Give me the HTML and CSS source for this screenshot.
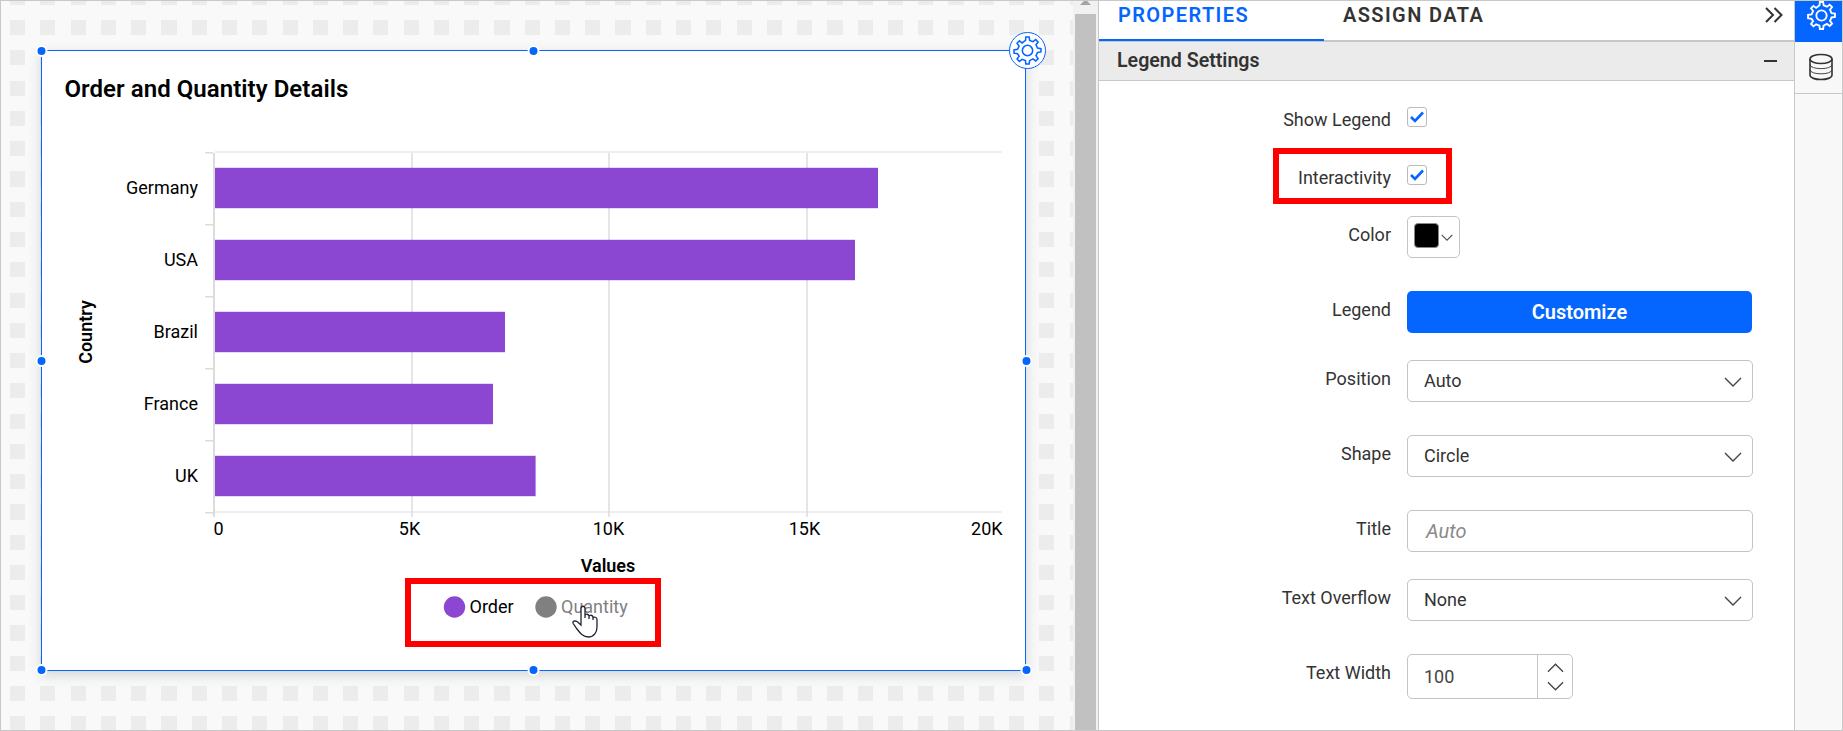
FILE: index.html
```html
<!DOCTYPE html>
<html lang="en">
<head>
<meta charset="utf-8">
<title>Legend Settings</title>
<link rel="stylesheet" href="styles.css">
</head>
<body>
<svg class="defs" width="0" height="0">
  <symbol id="gear" viewBox="-14 -14 28 28">
    <path d="M-1.900-9.800-1.600-13h3.200l.5 3.200 3.200 1.300 2.600-2 2.300 2.300-2 2.700 1.500 3.200 3.300.5v3.200l-3.300.5-1.500 3.200 2 2.700-2.300 2.300-2.600-2L2 9.800 1.600 13h-3.200L-2 9.800l-3.200-1.300-2.600 2-2.300-2.300 2-2.700-1.500-2.300-3.400-.6v-3.200l3.400-.5 1.500-3.200-2-2.700 2.300-2.300 2.600 2z"/>
    <circle r="5"/>
  </symbol>
  <symbol id="chev" viewBox="0 0 18 10"><path d="M1 1l8 8 8-8"/></symbol>
  <symbol id="check" viewBox="0 0 14 12"><path d="M1 6l4 4 8-8.500"/></symbol>
</svg>
<div class="app">
  <main class="canvas">
    <section class="widget">
      <h1 class="widget-title">Order and Quantity Details</h1>
      <svg class="chart" viewBox="42 51 983 619" width="983" height="619">
        <g class="grid">
          <path d="M215 152H1002M215 512H1002"/>
        </g>
        <g class="gridv">
          <path d="M412 153V517M609 153V517M807 153V517"/>
        </g>
        <path class="tick" d="M205 152.700h8M205 224.700h8M205 296.700h8M205 368.700h8M205 440.700h8M205 512.700h8"/>
        <g class="bars">
          <rect x="213.700" y="167.800" width="664.300" height="40.400"/>
          <rect x="213.700" y="239.800" width="641.300" height="40.400"/>
          <rect x="213.700" y="311.800" width="291.300" height="40.400"/>
          <rect x="213.700" y="383.800" width="279.300" height="40.400"/>
          <rect x="213.700" y="455.800" width="321.900" height="40.400"/>
        </g>
        <path class="axis" d="M214 153V517"/>
        <g class="cat">
          <text x="198" y="194">Germany</text>
          <text x="198" y="266">USA</text>
          <text x="198" y="338">Brazil</text>
          <text x="198" y="410">France</text>
          <text x="198" y="482">UK</text>
        </g>
        <g class="val">
          <text x="218.500" y="535">0</text>
          <text x="409.500" y="535">5K</text>
          <text x="608.500" y="535">10K</text>
          <text x="804.500" y="535">15K</text>
          <text x="986.800" y="535">20K</text>
        </g>
        <text class="name" x="608" y="572">Values</text>
        <text class="name" transform="translate(91.500 332) rotate(-90)">Country</text>
        <circle class="key-dot" cx="454.500" cy="607" r="10.700"/>
        <text class="key" x="469.500" y="613">Order</text>
        <circle class="key-dot key-off" cx="546" cy="607" r="10.700"/>
        <text class="key key-off" x="561" y="613">Quantity</text>
      </svg>
      <i class="dot n w"></i><i class="dot n c"></i>
      <i class="dot m w"></i><i class="dot m e"></i>
      <i class="dot s w"></i><i class="dot s c"></i><i class="dot s e"></i>
      <span class="badge"><svg width="29" height="29"><use href="#gear"/></svg></span>
      <span class="mark mark-legend"></span>
      <svg class="hand" viewBox="0 0 26 33" width="26" height="33">
        <path d="M9 20V3.500C9 .5 13 .5 13 3.500V13V10.500C14 8.500 16.500 9 17 11V14V11.500C18 9.500 20.500 10 21 12V15V13C22 11.500 25 12 25 14.500V22C25 27 22 32 16.500 32C11 32 8 28 5 24L1.200 18.500C0 16 3 15.500 5 16.500z"/>
      </svg>
    </section>
  </main>
  <div class="scroll"><i class="arrow"></i><i class="thumb"></i></div>
  <aside class="panel">
    <nav class="tabs">
      <span class="tab on">PROPERTIES</span>
      <span class="tab">ASSIGN DATA</span>
      <svg class="collapse" width="18" height="16" viewBox="0 0 18 16"><path d="M1 1l7 7-7 7M9.500 1l7 7-7 7"/></svg>
    </nav>
    <header class="section"><span>Legend Settings</span><i class="minus"></i></header>
    <div class="form">
      <div class="row tight r58"><label>Show Legend</label><span class="box"><svg width="14" height="12"><use href="#check"/></svg></span></div>
      <div class="row tight r51"><label>Interactivity</label><span class="box"><svg width="14" height="12"><use href="#check"/></svg></span><span class="mark mark-row"></span></div>
      <div class="row r75"><label>Color</label><span class="color"><i class="swatch"></i><svg width="12" height="7"><use href="#chev"/></svg></span></div>
      <div class="row r69"><label>Legend</label><button class="btn">Customize</button></div>
      <div class="row r75"><label>Position</label><span class="field">Auto<svg width="18" height="10"><use href="#chev"/></svg></span></div>
      <div class="row r75"><label>Shape</label><span class="field">Circle<svg width="18" height="10"><use href="#chev"/></svg></span></div>
      <div class="row r69"><label>Title</label><span class="field hint">Auto</span></div>
      <div class="row r75"><label>Text Overflow</label><span class="field">None<svg width="18" height="10"><use href="#chev"/></svg></span></div>
      <div class="row"><label>Text Width</label><span class="spin"><span class="num">100</span><span class="steps"><svg class="up" width="17" height="10"><use href="#chev"/></svg><svg width="17" height="10"><use href="#chev"/></svg></span></span></div>
    </div>
  </aside>
  <div class="rail">
    <span class="rail-on"><svg width="29" height="29"><use href="#gear"/></svg></span>
    <span class="rail-db"><svg width="24" height="28" viewBox="0 0 24 28"><ellipse cx="12" cy="6" rx="11" ry="4.500"/><path d="M1 6v16c0 6 22 6 22 0V6"/><path class="thin" d="M1 11.500c0 5.500 22 5.500 22 0M1 16.700c0 5.500 22 5.500 22 0"/></svg></span>
  </div>
</div>
</body>
</html>
```
FILE: styles.css
```css
* { box-sizing: border-box; }
body { margin: 0; font-family: Roboto, "Liberation Sans", sans-serif; font-size: 18px; color: #333; background: #fff; }
.defs { position: absolute; }
svg { display: block; fill: none; stroke: currentColor; }
.app { display: flex; width: 1843px; height: 731px; border: 1px solid #c8c8c8; overflow: hidden; }
.app > * { flex: none; }

.canvas {
  width: 1072px; padding: 49px 0 0 40px; overflow: hidden;
  background-color: #ececec;
  background-image:
    repeating-linear-gradient(90deg, transparent 0 15.130px, #f9f9f9 15.130px 30.270px),
    repeating-linear-gradient(180deg, transparent 0 15.130px, #f9f9f9 15.130px 30.270px);
  background-position: -21.200px 0, 0 -11.200px;
  background-size: 1200px 100%, 100% 800px;
}
.widget { position: relative; width: 985px; height: 621px; border: 1px solid #0565ff; background: #fff; box-shadow: 0 4px 12px rgba(60, 70, 80, .2); }
.widget-title { position: absolute; left: 22.500px; top: 23px; margin: 0; font-size: 24px; line-height: 30px; font-weight: 600; letter-spacing: .050px; color: #000; white-space: nowrap; }
.chart text { fill: #000; stroke: none; font-size: 18px; }
.grid path { stroke: #eee; stroke-width: 2; }
.gridv path { stroke: #ddd; stroke-width: 1.500; }
.tick { stroke: #dcdcdc; stroke-width: 1.500; }
.axis { stroke: #dcdcdc; stroke-width: 2; }
.bars rect { fill: #8b46d2; stroke: none; }
.cat text { text-anchor: end; }
.val text, .chart .name { text-anchor: middle; }
.chart .name { font-weight: 600; }
.key-dot { fill: #8b46d2; stroke: none; }
.chart .key-off { fill: #808080; }

.dot { position: absolute; width: 12px; height: 12px; border: 2px solid #fff; border-radius: 50%; background: #0565ff; transform: translateX(.5px); }
.n { top: -6px; } .m { top: 304px; } .s { top: 613px; }
.w { left: -7px; } .c { left: 485px; } .e { left: 978px; }
.badge { position: absolute; left: 967px; top: -19px; width: 37px; height: 37px; display: grid; place-items: center; border: 1.500px solid #0565ff; border-radius: 50%; background: #fff; color: #0565ff; stroke-width: 1.500; }
.mark { position: absolute; border: 6px solid #f00; }
.mark-legend { left: 363px; top: 527px; width: 256px; height: 69px; }
.hand { position: absolute; left: 530px; top: 554px; }
.hand path { fill: #fff; stroke: #223; stroke-width: 1.300; }

.scroll { width: 25px; padding: 0 2px; background: #f1f1f1; }
.arrow { display: block; height: 13px; }
.arrow::before { content: ""; display: block; width: 11px; height: 4px; margin: 0 auto; background: #a3a3a3; clip-path: polygon(35% 0, 65% 0, 100% 100%, 0 100%); }
.thumb { display: block; width: 21px; height: 717px; background: #c1c1c1; }

.panel { width: 697px; border: solid #c8c8c8; border-width: 0 1px; background: #fff; }
.tabs { position: relative; display: flex; height: 41px; font-size: 20px; font-weight: 600; letter-spacing: 1.400px; line-height: 28px; border-bottom: 2px solid #c8c8c8; }
.tab { width: 225px; height: 40px; padding-left: 19px; white-space: nowrap; }
.tab.on { color: #0565ff; border-bottom: 2px solid #0565ff; }
.collapse { margin: 6px 0 0 216px; stroke-width: 2; }
.section { display: flex; justify-content: space-between; align-items: center; height: 39px; padding: 0 17px 0 18px; font-size: 19.600px; font-weight: 600; background: #ebebeb; border-bottom: 1px solid #c8c8c8; }
.section span { padding-bottom: 2px; }
.minus { width: 13px; height: 2px; background: #333; }
.form { padding-top: 26px; }
.row { position: relative; display: grid; grid-template-columns: 292px 346px; gap: 16px; align-items: start; }
.r51 { height: 51px; } .r58 { height: 58px; } .r69 { height: 69px; } .r75 { height: 75px; }
.row label { padding-top: 7px; line-height: 24px; text-align: right; white-space: nowrap; }
.tight label { padding-top: 1px; }
.box { width: 20px; height: 20px; display: grid; place-items: center; border: 1px solid #bbb; border-radius: 3px; color: #0565ff; stroke-width: 2.600; }
.box svg { margin-bottom: 1px; }
.mark-row { left: 174px; top: -17px; width: 179px; height: 56px; }
.color { display: flex; align-items: center; gap: 2px; width: 53px; height: 42px; padding-left: 6px; border: 1px solid #c4c4c4; border-radius: 5px; color: #555; stroke-width: 1.800; }
.swatch { width: 25px; height: 25px; margin-top: -4px; border: 1px solid #888; border-radius: 4px; background: #000; }
.btn { width: 345px; height: 42px; border: 0; border-radius: 5px; background: #0565ff; color: #fff; font: 600 20px Roboto, sans-serif; }
.field { display: flex; justify-content: space-between; align-items: center; width: 346px; height: 42px; padding: 0 10px 2px 16px; border: 1px solid #c4c4c4; border-radius: 5px; stroke-width: 1.400; }
.field svg { margin-top: 3px; color: #444; }
.field.hint { color: #8a8a8a; font-style: italic; font-size: 20px; padding: 0 0 0 18px; }
.spin { display: flex; width: 166px; height: 45px; border: 1px solid #c4c4c4; border-radius: 5px; stroke-width: 1.400; color: #444; }
.num { width: 130px; padding-left: 16px; line-height: 43px; border-right: 1px solid #c4c4c4; }
.steps { flex: 1; display: flex; flex-direction: column; align-items: center; justify-content: center; gap: 8px; }
.up { transform: rotate(180deg); }

.rail { width: 47px; background: #f8f8f8; }
.rail-on { display: grid; place-items: start center; height: 41px; padding-left: 5px; background: #0565ff; color: #fff; stroke-width: 1.800; }
.rail-db { display: grid; place-items: center; height: 52px; padding: 0 0 2px 5px; border-bottom: 1px solid #c8c8c8; stroke-width: 1.600; }
.thin { stroke-width: .900; }
```
